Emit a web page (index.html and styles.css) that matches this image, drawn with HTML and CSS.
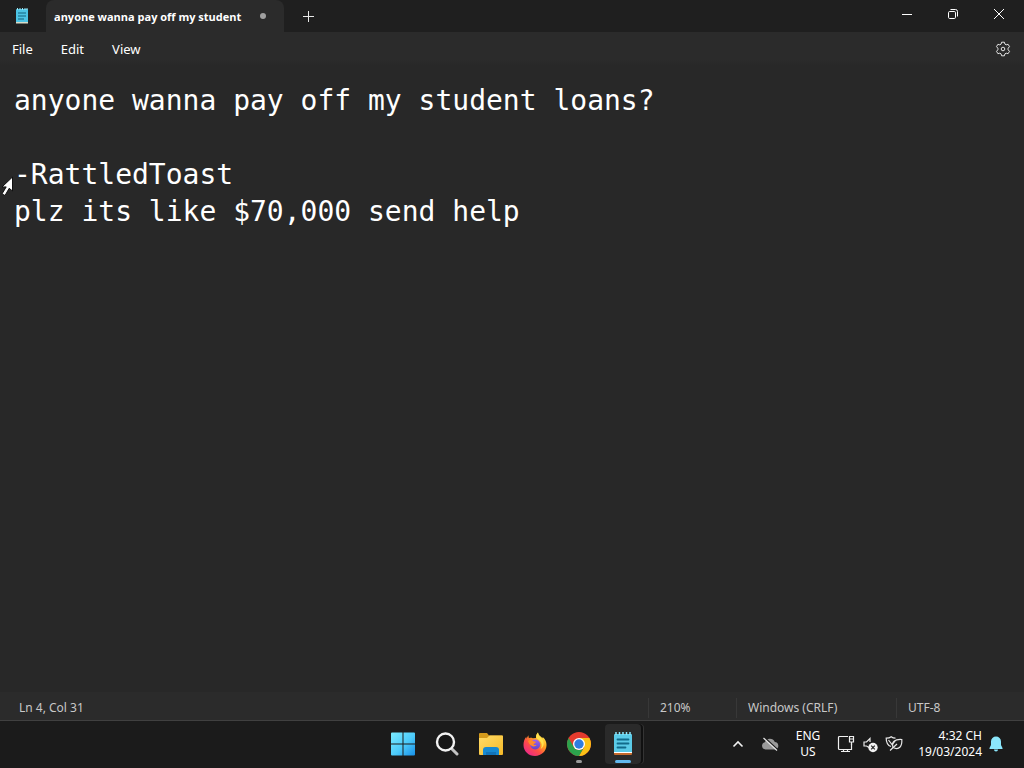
FILE: index.html
```html
<!DOCTYPE html>
<html lang="en">
<head>
    <meta charset="UTF-8">
    <meta name="viewport" content="width=device-width, initial-scale=1.0">
    <title>Notepad</title>
    <link rel="stylesheet" href="styles.css">
</head>
<body>
    <main class="window">
        <header class="titlebar">
            <svg class="app-icon" width="14" height="16" viewBox="0 0 14 16">
                <rect x="1" y="1" width="12" height="14" rx="1" fill="#4cc3e4"/>
                <path d="M1 14h12v1.500H1z" fill="#d8dcc8"/>
                <path d="M2.500 0v2M5 0v2M7.500 0v2M10 0v2M12 0v2" stroke="#9be6f5"/>
                <path d="M3 5h8M3 8h8M3 11h6" stroke="#12647f" stroke-width="1.200"/>
            </svg>
            <div class="tab">
                <span class="tab-title">anyone wanna pay off my student</span>
                <span class="unsaved"></span>
            </div>
            <button class="new-tab" aria-label="New tab">
                <svg width="12" height="12" viewBox="0 0 12 12"><path d="M6.500 1v11M1 6.500h11" stroke="#e8e8e8"/></svg>
            </button>
            <div class="window-buttons">
                <button aria-label="Minimize">
                    <svg width="12" height="12" viewBox="0 0 12 12"><path d="M1 6.500h10" stroke="#fff"/></svg>
                </button>
                <button aria-label="Restore">
                    <svg width="12" height="12" viewBox="0 0 12 12" fill="none" stroke="#fff"><rect x="1.500" y="3.500" width="7" height="7" rx="1.200"/><path d="M3.500 1.500H8.500a2 2 0 0 1 2 2V8.500"/></svg>
                </button>
                <button aria-label="Close">
                    <svg width="12" height="12" viewBox="0 0 12 12"><path d="M1 1l10 10M11 1L1 11" stroke="#fff"/></svg>
                </button>
            </div>
        </header>

        <nav class="menubar">
            <button>File</button>
            <button>Edit</button>
            <button>View</button>
            <button class="settings" aria-label="Settings">
                <svg width="16" height="16" viewBox="0 0 16 16" fill="none" stroke="#e4e4e4" stroke-linejoin="round">
                    <path d="M6.600 1.200h2.800l.5 1.900 1.300.7 1.900-.5 1.400 2.400L13.100 7.200v1.600l1.400 1.500-1.400 2.400-1.900-.5-1.300.7-.5 1.900H6.600l-.5-1.900-1.300-.7-1.900.5-1.400-2.400L2.900 8.800V7.200L1.500 5.700l1.400-2.400 1.900.5 1.300-.7z"/>
                    <circle cx="8" cy="8" r="1.800"/>
                </svg>
            </button>
        </nav>

        <textarea class="editor" aria-label="Text editor" spellcheck="false">anyone wanna pay off my student loans?

-RattledToast
plz its like $70,000 send help</textarea>

        <footer class="statusbar">
            <span class="position">Ln 4, Col 31</span>
            <span class="zoom">210%</span>
            <span class="line-ending">Windows (CRLF)</span>
            <span class="encoding">UTF-8</span>
        </footer>
    </main>

    <footer class="taskbar">
        <div class="apps">
            <button aria-label="Start">
                <svg width="24" height="24" viewBox="0 0 24 24">
                    <defs><linearGradient id="win" x1="0" y1="0" x2="24" y2="24" gradientUnits="userSpaceOnUse"><stop offset="0" stop-color="#7cecff"/><stop offset=".55" stop-color="#4ccaf9"/><stop offset="1" stop-color="#168ee8"/></linearGradient></defs>
                    <path d="M1 .5h10.500V11.500H0V1.500a1 1 0 0 1 1-1zM12.500.5H23a1 1 0 0 1 1 1v10H12.500zM0 12.500h11.500v11H1a1 1 0 0 1-1-1zM12.500 12.500H24v10a1 1 0 0 1-1 1H12.500z" fill="url(#win)"/>
                </svg>
            </button>
            <button aria-label="Search">
                <svg width="24" height="24" viewBox="0 0 24 24" fill="none">
                    <path d="M17 17l5 5" stroke="#c4c4c4" stroke-width="3" stroke-linecap="round"/>
                    <circle cx="10.500" cy="10" r="8.500" fill="#161616" stroke="#f2f2f2" stroke-width="2.400"/>
                </svg>
            </button>
            <button aria-label="File Explorer">
                <svg width="26" height="24" viewBox="0 0 26 24">
                    <defs><linearGradient id="folder" x1="0" y1="0" x2="1" y2="1"><stop offset="0" stop-color="#ffdc69"/><stop offset="1" stop-color="#f5b927"/></linearGradient></defs>
                    <path d="M1 2a1 1 0 0 1 1-1h7l2 2.500h13a1 1 0 0 1 1 1V10H1z" fill="#d39a1c"/>
                    <path d="M1 6h8l2.500-2.500H24a1 1 0 0 1 1 1V22a1 1 0 0 1-1 1H2a1 1 0 0 1-1-1z" fill="url(#folder)"/>
                    <path d="M5 23v-5a3 3 0 0 1 3-3h10a3 3 0 0 1 3 3v5z" fill="#1689d1"/>
                    <path d="M8 20h10v3H8z" fill="#1273b8"/>
                </svg>
            </button>
            <button aria-label="Firefox">
                <svg width="24" height="24" viewBox="0 0 24 24">
                    <defs>
                        <linearGradient id="fox" x1=".85" y1=".1" x2=".2" y2=".9"><stop offset="0" stop-color="#fff04c"/><stop offset=".35" stop-color="#ffa01e"/><stop offset=".65" stop-color="#ff4f45"/><stop offset="1" stop-color="#ee2c82"/></linearGradient>
                        <linearGradient id="globe" x1="0" y1="0" x2="0" y2="1"><stop offset="0" stop-color="#a062f0"/><stop offset="1" stop-color="#5f45c8"/></linearGradient>
                    </defs>
                    <path d="M15 .5c.4 2 1.200 3 3 4.200.4.300 1.100 1 1.500 1.600l.2-1.200c2.700 2.400 3.800 5 3.800 8C23.500 19.200 18.400 24 12 24S.5 19.100.5 13c0-3 .9-6 2.800-8.200l.2 1.900L5.300 3.200l.6 3c1.400-.5 2.600-.4 3.800 0L13 6c-.2-2 .5-4.200 2-5.500z" fill="url(#fox)"/>
                    <circle cx="12.200" cy="12.500" r="5" fill="url(#globe)"/>
                    <path d="M5 9c1.500-1.500 4-1.200 5.500.3l2.500.4c-.2 1.500-2.200 1.500-2.500 2.500.5 1 1.800 1 3 .8-1 1.800-3.500 1.800-5.300.5-1.500-1-2.500-2.500-3.200-4.500z" fill="#ff8a2a"/>
                    <path d="M15 .5c-1.500 1.400-2.200 3.500-1.600 5.500 1.200 1.700 3.800 2.200 4.800 4.700 1 2.300.4 4.700-.7 6.300 3.500-1.700 4.400-6.600 1.600-10-.6-.9-1.500-1.600-2.200-2.300C15.800 3.500 15.200 2.300 15 .5z" fill="#ffe14d"/>
                </svg>
            </button>
            <button class="running" aria-label="Chrome">
                <svg width="24" height="24" viewBox="0 0 24 24">
                    <circle cx="12" cy="12" r="12" fill="#e33b2e"/>
                    <path d="M12 6h10.390A12 12 0 0 1 12 24l5.200-9z" fill="#fbc116"/>
                    <path d="M1.610 6A12 12 0 0 0 12 24l5.200-9a6 6 0 0 1-10.400 0z" fill="#2ba24c"/>
                    <circle cx="12" cy="12" r="6" fill="#fff"/>
                    <circle cx="12" cy="12" r="4.700" fill="#2f7de1"/>
                </svg>
            </button>
            <button class="active" aria-label="Notepad">
                <svg width="20" height="24" viewBox="0 0 20 24">
                    <rect x="1" y="2" width="18" height="20" rx="1" fill="#5bcbe8"/>
                    <path d="M1 20h18v1H1z" fill="#fff"/>
                    <path d="M1 21h18v1a1 1 0 0 1-1 1H2a1 1 0 0 1-1-1z" fill="#c66a2c"/>
                    <path d="M3 0v3M6.500 0v3M10 0v3M13.500 0v3M17 0v3" stroke="#8ce6fa" stroke-width="1.500"/>
                    <path d="M4.500 7.500h11M4.500 11.500h11M4.500 15.500h8" stroke="#126b8b" stroke-width="1.800" stroke-linecap="round"/>
                </svg>
            </button>
        </div>

        <div class="tray">
            <button class="chevron" aria-label="Show hidden icons">
                <svg width="12" height="8" viewBox="0 0 12 8" fill="none"><path d="M1.500 6.500L6 2l4.500 4.500" stroke="#f2f2f2" stroke-width="1.600"/></svg>
            </button>
            <button class="cloud" aria-label="OneDrive">
                <svg width="18" height="16" viewBox="0 0 18 16" fill="none">
                    <path d="M4.500 13.500a3.700 3.700 0 0 1-.6-7.300A5.400 5.400 0 0 1 13.800 6a3.800 3.800 0 0 1 .5 7.500z" fill="#9a9a9a"/>
                    <path d="M3.500 1.500l13 12" stroke="#1b1b1b" stroke-width="1.500"/>
                    <path d="M2.500 2l13.500 12.500" stroke="#e4e4e4" stroke-width="1.200"/>
                </svg>
            </button>
            <button class="language">ENG<br>US</button>
            <button class="quick" aria-label="Network, volume and battery">
                <svg width="18" height="18" viewBox="0 0 18 18" fill="none" stroke="#f0f0f0" stroke-width="1.200">
                    <path d="M11 1.500H2.500a1 1 0 0 0-1 1v11a1 1 0 0 0 1 1H14.500V8.500M4 16.500h9M6.500 14.500v2M10.500 14.500v2"/>
                    <path d="M12.500 1.500h4v5.500h-4zM12.500 4h4M14.500 7v3"/>
                </svg>
                <svg width="18" height="18" viewBox="0 0 18 18" fill="none">
                    <path d="M8 12.500L5.500 11H3V7h2.500L9 3.500V7" stroke="#e8e8e8" stroke-width="1.200"/>
                    <circle cx="12" cy="12.500" r="4.700" fill="#f2f2f2"/>
                    <path d="M10.200 10.700l3.600 3.600M13.800 10.700l-3.600 3.600" stroke="#222" stroke-width="1.200"/>
                </svg>
                <svg width="18" height="18" viewBox="0 0 18 18" fill="none" stroke="#e6e6e6" stroke-width="1.200">
                    <path d="M6 11.500C3 10.500 1.200 8 1.200 3.200c2.300 0 3.600-.3 5-1.500 1.400 1.200 2.600 1.500 4.300 1.500"/>
                    <path d="M3.500 5l3.500 4.500L10 6M5 15.500l7-6.500"/>
                    <path d="M8 12.500C6.500 7 9.500 4 16.800 4.500 17.300 11.500 14 15.500 8 12.500z"/>
                </svg>
            </button>
            <button class="clock">4:32 CH<br>19/03/2024</button>
            <button class="bell" aria-label="Notifications">
                <svg width="14" height="16" viewBox="0 0 14 16" fill="#8be6fb">
                    <path d="M7 .5a5 5 0 0 1 5 5V9l1.500 3v1H.5v-1L2 9V5.500a5 5 0 0 1 5-5zM5 13.500h4a2 2 0 0 1-4 0z"/>
                </svg>
            </button>
        </div>
    </footer>

    <svg class="cursor" width="14" height="22" viewBox="0 0 14 22">
        <path d="M12.500 1v14l-3.300-2.700L5 19.500l-3-1.600 4.200-7L2 11z" fill="#fff" stroke="#111"/>
    </svg>
</body>
</html>
```

FILE: styles.css
```css
* {
    box-sizing: border-box;
}
body {
    margin: 0;
    height: 100vh;
    display: flex;
    flex-direction: column;
    overflow: hidden;
    background-color: #1c1c1c;
    color: #fff;
    font-family: "Noto Sans", "Open Sans", sans-serif;
    font-size: 12px;
}
button {
    display: flex;
    align-items: center;
    justify-content: center;
    padding: 0;
    border: none;
    background: none;
    color: inherit;
    font: inherit;
}
svg {
    display: block;
    flex: none;
}

/* window */
.window {
    flex: 1;
    display: flex;
    flex-direction: column;
    min-height: 0;
    background-color: #282828;
}
.titlebar {
    display: flex;
    height: 32px;
    background-color: #1f1f1f;
}
.app-icon {
    margin: 8px 17px 0 15px;
}
.tab {
    display: flex;
    align-items: center;
    justify-content: space-between;
    width: 238px;
    padding: 0 18px 0 8px;
    border-radius: 8px 8px 0 0;
    background-color: #2b2b2b;
}
.tab-title {
    font-family: "Open Sans", sans-serif;
    font-size: 11px;
    font-weight: 700;
    white-space: nowrap;
}
.unsaved {
    width: 6px;
    height: 6px;
    border-radius: 50%;
    background-color: #a0a0a0;
}
.new-tab {
    width: 48px;
}
.window-buttons {
    display: flex;
    margin-left: auto;
    padding: 0 2px 4px 0;
}
.window-buttons button {
    width: 46px;
}
.menubar {
    display: flex;
    align-items: center;
    height: 34px;
    padding: 0 13px 0 12px;
    gap: 28px;
    background: linear-gradient(#2b2b2b 80%, #282828);
    font-size: 13px;
}
.settings {
    margin-left: auto;
}
.editor {
    flex: 1;
    width: 100%;
    padding: 16px 14px;
    border: none;
    outline: none;
    resize: none;
    background-color: #282828;
    color: #fff;
    font-family: "DejaVu Sans Mono", monospace;
    font-size: 28px;
    line-height: 37px;
}
.statusbar {
    display: flex;
    align-items: center;
    height: 29px;
    padding-top: 4px;
    border-bottom: 1px solid #404040;
    background-color: #2b2b2b;
    color: #c8c8c8;
    line-height: 20px;
}
.position {
    flex: 1;
    padding-left: 19px;
}
.zoom,
.line-ending,
.encoding {
    padding-left: 11px;
    border-left: 1px solid #383838;
}
.zoom {
    width: 88px;
}
.line-ending {
    width: 160px;
}
.encoding {
    width: 128px;
}

/* taskbar */
.taskbar {
    display: grid;
    grid-template-columns: 1fr auto 1fr;
    height: 47px;
    padding-bottom: 1px;
    background-color: #1b1b1b;
}
.apps {
    grid-column: 2;
    display: flex;
    padding-left: 2px;
}
.apps button {
    position: relative;
    width: 44px;
}
.running::after,
.active::after {
    content: "";
    position: absolute;
    bottom: 4px;
    width: 6px;
    height: 3px;
    border-radius: 2px;
    background-color: #9a9a9a;
}
.apps .active {
    width: 36px;
    margin: 3px 4px;
    border-radius: 4px;
    background-color: #2a2a2a;
    box-shadow: 2px 0 #101010, 3px 0 #343434;
}
.active::after {
    bottom: 1px;
    width: 16px;
    background-color: #62b8ee;
}
.tray {
    display: flex;
    justify-content: flex-end;
    padding-right: 14px;
    line-height: 16px;
}
.chevron {
    width: 28px;
}
.cloud {
    width: 36px;
}
.language {
    width: 40px;
}
.quick {
    width: 84px;
    gap: 6px;
}
.clock {
    width: 70px;
    justify-content: flex-end;
    text-align: right;
}
.bell {
    width: 28px;
}

.cursor {
    position: absolute;
    left: 0;
    top: 176px;
}
```
